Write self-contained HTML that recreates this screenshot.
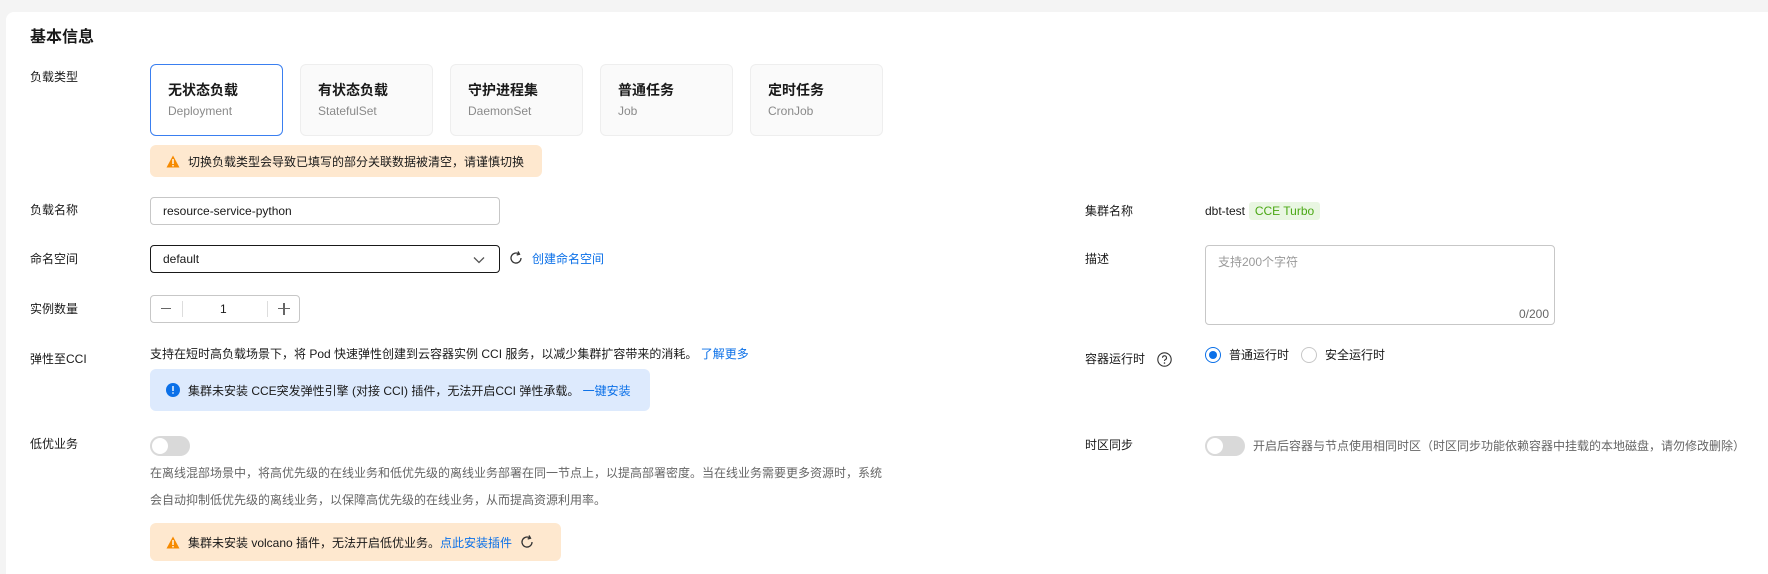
<!DOCTYPE html>
<html style="width:1768px;height:574px;overflow:hidden"><head><meta charset="utf-8"><style>
*{margin:0;padding:0;box-sizing:border-box}
body{width:1768px;height:574px;background:#f4f4f4;font-family:"Liberation Sans","Noto Sans CJK SC",sans-serif;font-size:12px;color:#191919;position:relative;overflow:hidden}
.card{position:absolute;left:6px;top:12px;width:1762px;height:562px;background:#fff;border-radius:8px 0 0 0}
.a{position:absolute;white-space:nowrap}
.lbl{position:absolute;left:30px;font-size:12px;color:#191919;line-height:16px}
.tc{position:absolute;top:64px;width:133px;height:72px;border:1px solid #eee;background:#fafafa;border-radius:6px;padding:16px 0 0 17px}
.tc b{display:block;font-size:14px;line-height:18px;color:#191919}
.tc span{display:block;font-size:12px;color:#8a8a8a;margin-top:4px;line-height:16px}
.warn{position:absolute;background:#fee8cf;border-radius:6px;display:flex;align-items:center;padding-left:16px;font-size:12px;color:#191919}
.link{color:#0b70e8}
.inp{position:absolute;border:1px solid #c7c7c7;border-radius:4px;background:#fff;font-size:12px;padding-left:12px;line-height:26px}
.tog{position:absolute;width:40px;height:20px;background:#d9d9d9;border-radius:10px}
.tog:after{content:"";position:absolute;left:2px;top:2px;width:16px;height:16px;border-radius:50%;background:#fff}
</style></head><body>
<div class="card"></div>
<div class="a" style="left:30px;top:28px;font-size:16px;font-weight:bold;line-height:20px">基本信息</div>

<div class="lbl" style="top:69px">负载类型</div>
<div class="tc" style="left:150px;border-color:#3a7ff0;background:#fff"><b>无状态负载</b><span>Deployment</span></div>
<div class="tc" style="left:300px"><b>有状态负载</b><span>StatefulSet</span></div>
<div class="tc" style="left:450px"><b>守护进程集</b><span>DaemonSet</span></div>
<div class="tc" style="left:600px"><b>普通任务</b><span>Job</span></div>
<div class="tc" style="left:750px"><b>定时任务</b><span>CronJob</span></div>

<div class="warn" style="left:150px;top:145px;width:392px;height:32px">
<svg width="14" height="13" viewBox="0 0 14 13" style="margin-right:8px"><path d="M7 0.5L13.5 12.5H0.5Z" fill="#f68a00"/><rect x="6.3" y="4" width="1.4" height="5" fill="#fff"/><rect x="6.3" y="10" width="1.4" height="1.4" fill="#fff"/></svg>切换负载类型会导致已填写的部分关联数据被清空，请谨慎切换</div>

<div class="lbl" style="top:202px">负载名称</div>
<div class="inp" style="left:150px;top:197px;width:350px;height:28px">resource-service-python</div>

<div class="lbl" style="top:251px">命名空间</div>
<div class="inp" style="left:150px;top:245px;width:350px;height:28px;border-color:#191919">default
<svg width="12" height="8" viewBox="0 0 12 8" style="position:absolute;right:14px;top:10px"><path d="M1 1.5L6 6.5L11 1.5" fill="none" stroke="#555" stroke-width="1.3"/></svg></div>
<svg class="a" style="left:509px;top:251px" width="14" height="14" viewBox="0 0 14 14"><path d="M12 7A5 5 0 1 1 9.5 2.7" fill="none" stroke="#333" stroke-width="1.3"/><path d="M9 0.5L10.5 3.2L7.7 4" fill="none" stroke="#333" stroke-width="1.3"/></svg>
<div class="a link" style="left:532px;top:251px;line-height:16px">创建命名空间</div>

<div class="lbl" style="top:301px">实例数量</div>
<div class="inp" style="left:150px;top:295px;width:150px;height:28px;padding:0"></div>
<div class="a" style="left:161px;top:308px;width:10px;height:1.4px;background:#666"></div>
<div class="a" style="left:182px;top:301px;width:1px;height:16px;background:#ddd"></div>
<div class="a" style="left:220px;top:301px;font-size:12px;line-height:16px">1</div>
<div class="a" style="left:267px;top:301px;width:1px;height:16px;background:#ddd"></div>
<div class="a" style="left:278px;top:308px;width:12px;height:1.4px;background:#666"></div>
<div class="a" style="left:283.3px;top:303px;width:1.4px;height:12px;background:#666"></div>

<div class="lbl" style="top:351px">弹性至CCI</div>
<div class="a" style="left:150px;top:346px;line-height:16px">支持在短时高负载场景下，将 Pod 快速弹性创建到云容器实例 CCI 服务，以减少集群扩容带来的消耗。 <span class="link">了解更多</span></div>
<div class="warn" style="left:150px;top:369px;width:500px;height:42px;background:#ddeafd">
<svg width="14" height="14" viewBox="0 0 14 14" style="margin-right:8px"><circle cx="7" cy="7" r="7" fill="#0b70e8"/><rect x="6.3" y="3" width="1.4" height="5" fill="#fff"/><rect x="6.3" y="9.3" width="1.4" height="1.4" fill="#fff"/></svg>集群未安装 CCE突发弹性引擎 (对接 CCI) 插件，无法开启CCI 弹性承载。&nbsp;<span class="link">一键安装</span></div>

<div class="lbl" style="top:436px">低优业务</div>
<div class="tog" style="left:150px;top:436px"></div>
<div class="a" style="left:150px;top:465px;color:#666;line-height:16px">在离线混部场景中，将高优先级的在线业务和低优先级的离线业务部署在同一节点上，以提高部署密度。当在线业务需要更多资源时，系统</div>
<div class="a" style="left:150px;top:492px;color:#666;line-height:16px">会自动抑制低优先级的离线业务，以保障高优先级的在线业务，从而提高资源利用率。</div>
<div class="warn" style="left:150px;top:523px;width:411px;height:38px">
<svg width="14" height="13" viewBox="0 0 14 13" style="margin-right:8px"><path d="M7 0.5L13.5 12.5H0.5Z" fill="#f68a00"/><rect x="6.3" y="4" width="1.4" height="5" fill="#fff"/><rect x="6.3" y="10" width="1.4" height="1.4" fill="#fff"/></svg>集群未安装 volcano 插件，无法开启低优业务。<span class="link">点此安装插件</span>
<svg width="14" height="14" viewBox="0 0 14 14" style="margin-left:8px"><path d="M12 7A5 5 0 1 1 9.5 2.7" fill="none" stroke="#333" stroke-width="1.3"/><path d="M9 0.5L10.5 3.2L7.7 4" fill="none" stroke="#333" stroke-width="1.3"/></svg></div>

<div class="a" style="left:1085px;top:203px;line-height:16px">集群名称</div>
<div class="a" style="left:1205px;top:203px;line-height:16px">dbt-test</div>
<div class="a" style="left:1249px;top:202px;width:71px;height:18px;background:#e9f6e2;color:#4aa814;border-radius:3px;text-align:center;line-height:18px">CCE Turbo</div>

<div class="a" style="left:1085px;top:251px;line-height:16px">描述</div>
<div class="inp" style="left:1205px;top:245px;width:350px;height:80px;color:#999;padding:8px 12px;line-height:16px">支持200个字符</div>
<div class="a" style="left:1519px;top:307px;color:#666;line-height:14px">0/200</div>

<div class="a" style="left:1085px;top:351px;line-height:16px">容器运行时</div>
<svg class="a" style="left:1157px;top:352px" width="15" height="15" viewBox="0 0 15 15"><circle cx="7.5" cy="7.5" r="6.7" fill="none" stroke="#333" stroke-width="1.1"/><path d="M5.5 5.8a2 2 0 1 1 2.8 1.8c-.6.3-.8.7-.8 1.4" fill="none" stroke="#333" stroke-width="1.1"/><circle cx="7.5" cy="11" r=".8" fill="#333"/></svg>
<div class="a" style="left:1205px;top:347px;width:16px;height:16px;border-radius:50%;border:1px solid #0b70e8"></div>
<div class="a" style="left:1209px;top:351px;width:8px;height:8px;border-radius:50%;background:#0b70e8"></div>
<div class="a" style="left:1229px;top:347px;line-height:16px">普通运行时</div>
<div class="a" style="left:1301px;top:347px;width:16px;height:16px;border-radius:50%;border:1px solid #c7c7c7"></div>
<div class="a" style="left:1325px;top:347px;line-height:16px">安全运行时</div>

<div class="a" style="left:1085px;top:437px;line-height:16px">时区同步</div>
<div class="tog" style="left:1205px;top:436px"></div>
<div class="a" style="left:1253px;top:438px;color:#666;line-height:16px">开启后容器与节点使用相同时区（时区同步功能依赖容器中挂载的本地磁盘，请勿修改删除）</div>
</body></html>
